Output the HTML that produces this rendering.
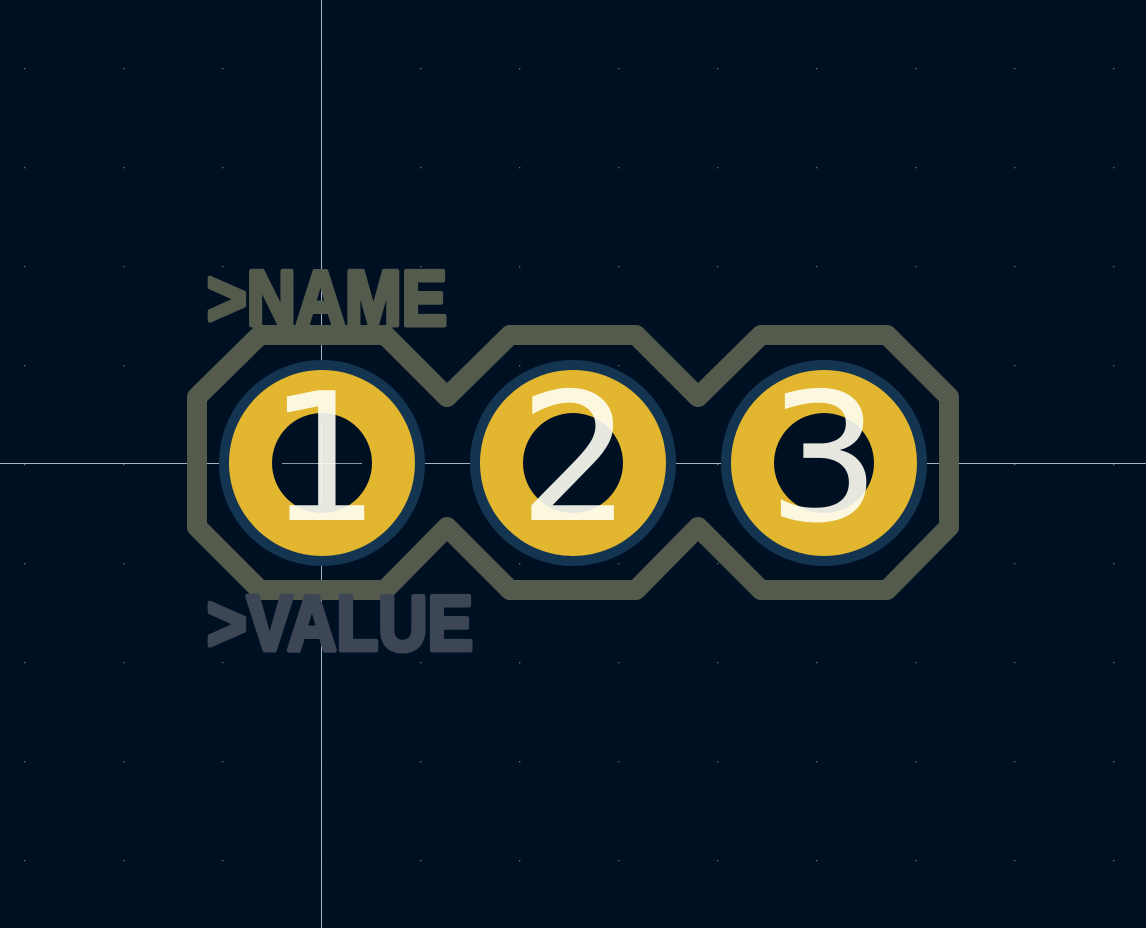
<!DOCTYPE html>
<html><head><meta charset="utf-8"><style>
html,body{margin:0;padding:0;background:#001023;}
svg{display:block}
</style></head><body>
<svg width="1146" height="928" viewBox="0 0 1146 928" xmlns="http://www.w3.org/2000/svg">
<defs>
<pattern id="g" x="24" y="68" width="99" height="99" patternUnits="userSpaceOnUse">
<rect x="0" y="0" width="1.3" height="1.3" fill="#5f6f80"/>
</pattern>
</defs>
<rect width="1146" height="928" fill="#001023"/>
<rect x="23" y="67" width="1123" height="861" fill="url(#g)"/>
<line x1="321.5" y1="0" x2="321.5" y2="928" stroke="#a9b3c0" stroke-width="1"/>
<line x1="0" y1="463.5" x2="1146" y2="463.5" stroke="#a9b3c0" stroke-width="1"/>
<polygon points="197,397 260,335 385,335 447,397 510,335 636,335 698,397 761,335 887,335 949,397 949,527 887,590 761,590 698,527 636,590 510,590 447,527 385,590 260,590 197,527" fill="none" stroke="#545b4c" stroke-width="20" stroke-linejoin="round"/>
<g>
<circle cx="322" cy="463" r="103" fill="#133552"/>
<circle cx="322" cy="463" r="93" fill="#e2b72f"/>
<circle cx="322" cy="463" r="50" fill="#001023"/>
<circle cx="573" cy="463" r="103" fill="#133552"/>
<circle cx="573" cy="463" r="93" fill="#e2b72f"/>
<circle cx="573" cy="463" r="50" fill="#001023"/>
<circle cx="824" cy="463" r="103" fill="#133552"/>
<circle cx="824" cy="463" r="93" fill="#e2b72f"/>
<circle cx="824" cy="463" r="50" fill="#001023"/>
</g>
<line x1="282" y1="463.5" x2="362" y2="463.5" stroke="#8a949f" stroke-width="1"/>
<line x1="321.5" y1="423" x2="321.5" y2="503" stroke="#8a949f" stroke-width="1"/>
<g font-family="DejaVu Sans, sans-serif" font-size="178" fill="#fffff4" fill-opacity="0.9" text-anchor="middle">
<text x="324" y="520">1</text>
<text x="575" y="520">2</text>
<text x="824" y="520">3</text>
</g>
<g font-family="Liberation Sans Narrow, Liberation Sans, sans-serif" font-weight="bold" font-size="78" stroke-width="5" stroke-linejoin="round">
<text x="207" y="325" fill="#545b4c" stroke="#545b4c" textLength="240" lengthAdjust="spacingAndGlyphs">&gt;NAME</text>
<text x="207" y="650" fill="#3c4655" stroke="#3c4655" textLength="266" lengthAdjust="spacingAndGlyphs">&gt;VALUE</text>
</g>
</svg>
</body></html>
